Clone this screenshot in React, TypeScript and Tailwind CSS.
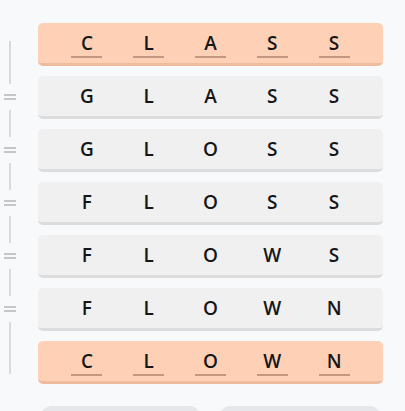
const rows = [
  { word: "CLASS", end: true },
  { word: "GLASS", end: false },
  { word: "GLOSS", end: false },
  { word: "FLOSS", end: false },
  { word: "FLOWS", end: false },
  { word: "FLOWN", end: false },
  { word: "CLOWN", end: true },
];

function Equals() {
  return (
    <div className="h-[26px] flex flex-col items-center justify-center gap-[2px]">
      <div className="w-[12px] h-[2px] bg-[#c4c6ca]" />
      <div className="w-[12px] h-[2px] bg-[#c4c6ca]" />
    </div>
  );
}

function Line({ h }: { h: string }) {
  return <div className={`w-[2px] bg-[#d9dadd] ${h}`} />;
}

export default function App() {
  return (
    <div
      className="w-[405px] h-[411px] overflow-hidden bg-[#f8f9fb] pt-[23px]"
      style={{ fontFamily: '"Open Sans", "Noto Sans", sans-serif' }}
    >
      <div className="flex">
        {/* Ladder rail */}
        <div className="w-[38px] pr-[18px] pt-[18px] flex flex-col items-center">
          <Line h="h-[43px]" />
          <Equals />
          <Line h="h-[27px]" />
          <Equals />
          <Line h="h-[27px]" />
          <Equals />
          <Line h="h-[27px]" />
          <Equals />
          <Line h="h-[27px]" />
          <Equals />
          <Line h="h-[52px]" />
        </div>

        {/* Word rows */}
        <div className="w-[345px] flex flex-col gap-[10px]">
          {rows.map((row, i) => (
            <div
              key={i}
              className={`h-[43px] rounded-[5px] border-b-[3px] px-[18px] pt-[8px] grid grid-cols-5 ${
                row.end
                  ? "bg-[#fed1b6] border-[#efbb9e]"
                  : "bg-[#f0f0f0] border-[#dcdcdc]"
              }`}
            >
              {row.word.split("").map((ch, j) => (
                <div key={j} className="flex flex-col items-center">
                  <span className="text-[19px] leading-[25px] font-semibold text-[#161616]">
                    {ch}
                  </span>
                  <span
                    className={`w-[31px] h-[2px] ${
                      row.end ? "bg-[#c29880]" : "bg-transparent"
                    }`}
                  />
                </div>
              ))}
            </div>
          ))}
          <div className="mt-[12px] flex gap-[20px] pl-[3px]">
            <div className="w-[159px] h-[40px] rounded-[10px] bg-[#e6e7ea]" />
            <div className="w-[160px] h-[40px] rounded-[10px] bg-[#e6e7ea]" />
          </div>
        </div>
      </div>
    </div>
  );
}
